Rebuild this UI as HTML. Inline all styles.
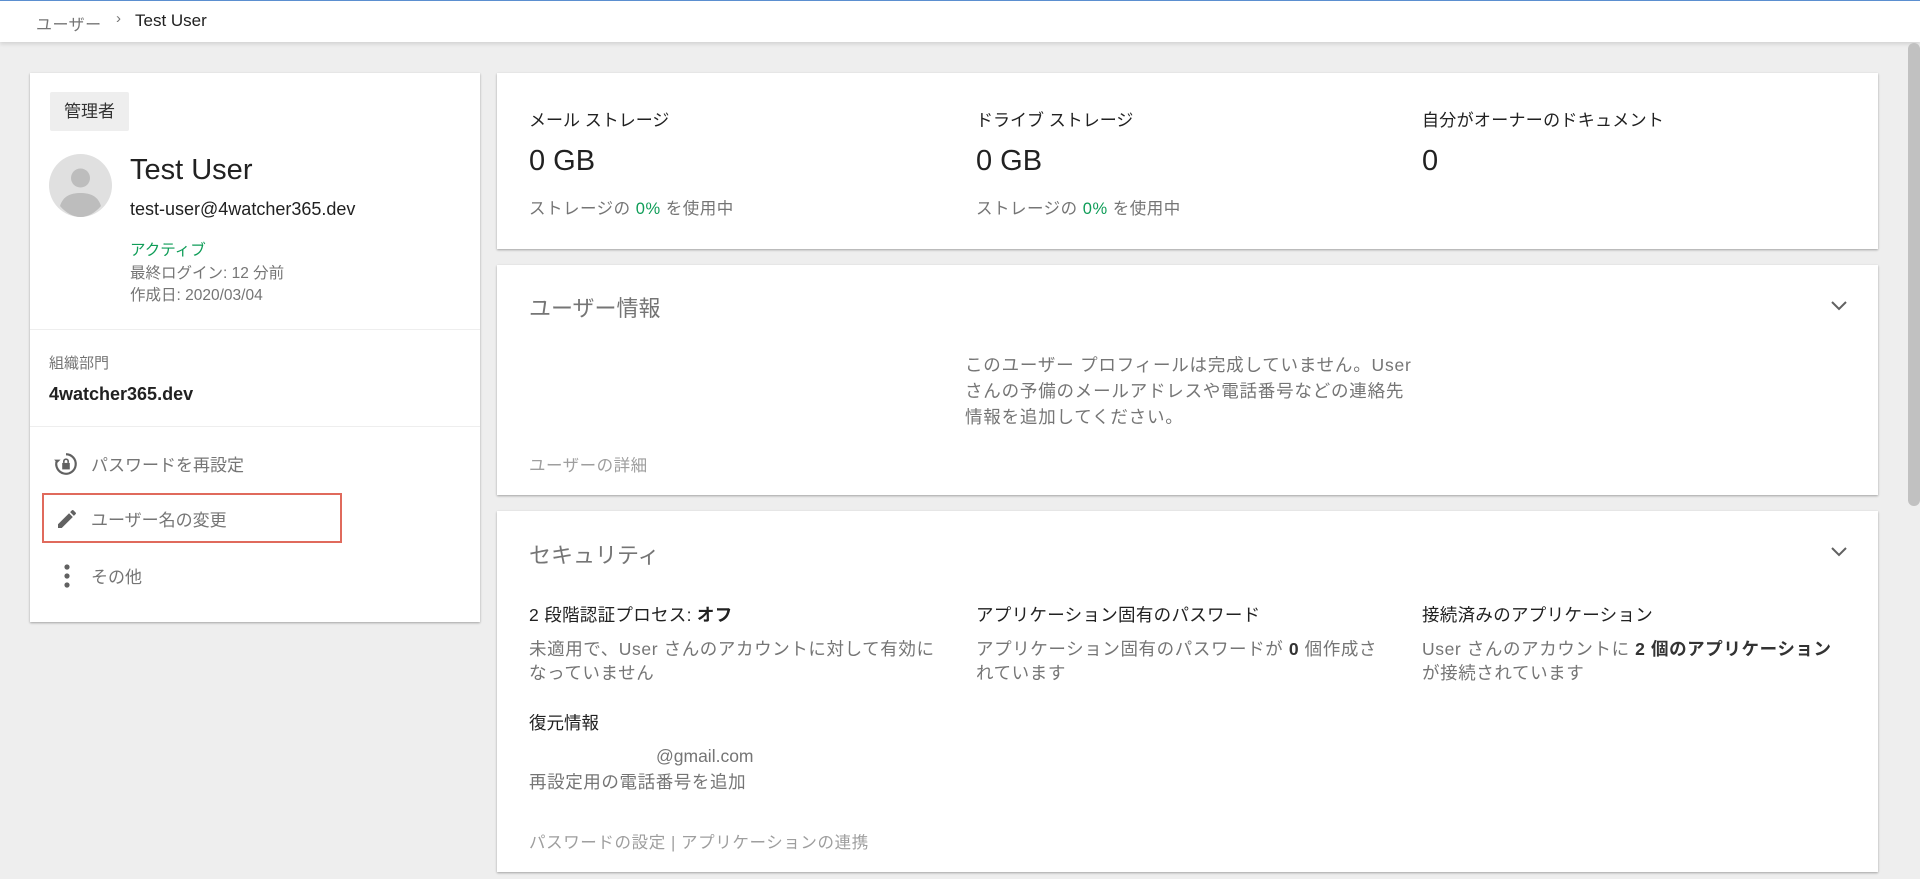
<!DOCTYPE html>
<html><head><meta charset="utf-8"><style>
*{margin:0;padding:0;box-sizing:border-box}
body{width:1920px;height:879px;overflow:hidden;background:#eeeeee;font-family:"Liberation Sans","Noto Sans CJK JP",sans-serif;color:#212121;position:relative}
.a{position:absolute;white-space:nowrap}
.card{position:absolute;background:#fff;box-shadow:0 1px 2px rgba(0,0,0,.25),0 1px 3px rgba(0,0,0,.08)}
.g{color:#757575}
.lg{color:#9e9e9e}
.gr{color:#0f9d58}
.d{font-size:17.5px;letter-spacing:0.6px;line-height:24px}
</style></head><body>
<div class="a" style="left:0;top:0;width:1920px;height:42px;background:#fff;border-top:1px solid #5b8fd0;box-shadow:0 2px 4px rgba(0,0,0,.12)"></div>
<div class="a g" style="left:36px;top:11px;font-size:16px;letter-spacing:0.5px">ユーザー</div>
<div class="a g" style="left:116px;top:10px;font-size:15px">›</div>
<div class="a" style="left:135px;top:11px;font-size:17px;color:#202020">Test User</div>

<!-- left card -->
<div class="card" style="left:30px;top:73px;width:450px;height:549px"></div>
<div class="a" style="left:50px;top:92px;width:79px;height:39px;background:#eeeeee;border-radius:2px;font-size:17px;line-height:39px;text-align:center;color:#333">管理者</div>
<svg class="a" style="left:49px;top:154px" width="63" height="63" viewBox="0 0 63 63"><circle cx="31.5" cy="31.5" r="31.5" fill="#e0e0e0"/><circle cx="31.5" cy="24" r="9.5" fill="#bdbdbd"/><path d="M11 52 C14 42 22 39 31.5 39 C41 39 49 42 52 52 C46 59 39 63 31.5 63 C24 63 17 59 11 52Z" fill="#bdbdbd"/></svg>
<div class="a" style="left:130px;top:154px;font-size:29px;color:#212121">Test User</div>
<div class="a" style="left:130px;top:199px;font-size:18px;color:#212121">test-user@4watcher365.dev</div>
<div class="a gr" style="left:130px;top:238px;font-size:15.5px">アクティブ</div>
<div class="a g" style="left:130px;top:261px;font-size:15.5px">最終ログイン: 12 分前</div>
<div class="a g" style="left:130px;top:283px;font-size:15.5px">作成日: 2020/03/04</div>
<div class="a" style="left:30px;top:329px;width:450px;height:1px;background:#eeeeee"></div>
<div class="a g" style="left:49px;top:352px;font-size:15px">組織部門</div>
<div class="a" style="left:49px;top:384px;font-size:18px;font-weight:bold;color:#212121">4watcher365.dev</div>
<div class="a" style="left:30px;top:426px;width:450px;height:1px;background:#eeeeee"></div>
<svg class="a" style="left:53px;top:451px" width="26" height="26" viewBox="0 0 24 24"><path d="M12 3a9 9 0 1 1-8.5 6" fill="none" stroke="#616161" stroke-width="2"/><path d="M1 8l3 3 3-3" fill="#616161"/><rect x="8.5" y="11" width="7" height="6" fill="#616161"/><path d="M10 11V9.5a2 2 0 0 1 4 0V11" fill="none" stroke="#616161" stroke-width="1.5"/></svg>
<div class="a g" style="left:91px;top:451px;font-size:17px">パスワードを再設定</div>
<div class="a" style="left:42px;top:493px;width:300px;height:50px;border:2px solid #e06a5c"></div>
<svg class="a" style="left:55px;top:507px" width="24" height="24" viewBox="0 0 24 24"><path d="M3 17.25V21h3.75L17.81 9.94l-3.75-3.75L3 17.25zM20.71 7.04a1 1 0 0 0 0-1.41l-2.34-2.34a1 1 0 0 0-1.41 0l-1.83 1.83 3.75 3.75 1.83-1.83z" fill="#616161"/></svg>
<div class="a g" style="left:91px;top:506px;font-size:17px">ユーザー名の変更</div>
<svg class="a" style="left:62px;top:563px" width="10" height="26" viewBox="0 0 10 26"><circle cx="5" cy="4" r="2.6" fill="#616161"/><circle cx="5" cy="13" r="2.6" fill="#616161"/><circle cx="5" cy="22" r="2.6" fill="#616161"/></svg>
<div class="a g" style="left:91px;top:563px;font-size:17px">その他</div>

<!-- card1 -->
<div class="card" style="left:497px;top:73px;width:1381px;height:176px"></div>
<div class="a" style="left:529px;top:106px;font-size:17px">メール ストレージ</div>
<div class="a" style="left:529px;top:145px;font-size:29px">0 GB</div>
<div class="a g" style="left:529px;top:195px;font-size:16.5px;letter-spacing:0.5px">ストレージの <span class="gr">0%</span> を使用中</div>
<div class="a" style="left:976px;top:106px;font-size:17px">ドライブ ストレージ</div>
<div class="a" style="left:976px;top:145px;font-size:29px">0 GB</div>
<div class="a g" style="left:976px;top:195px;font-size:16.5px;letter-spacing:0.5px">ストレージの <span class="gr">0%</span> を使用中</div>
<div class="a" style="left:1422px;top:106px;font-size:17px;letter-spacing:0.3px">自分がオーナーのドキュメント</div>
<div class="a" style="left:1422px;top:145px;font-size:29px">0</div>

<!-- card2 -->
<div class="card" style="left:497px;top:265px;width:1381px;height:230px"></div>
<div class="a g" style="left:529px;top:291px;font-size:22px">ユーザー情報</div>
<svg class="a" style="left:1830px;top:300px" width="18" height="12" viewBox="0 0 18 12"><path d="M2 2l7 7 7-7" fill="none" stroke="#616161" stroke-width="2"/></svg>
<div class="a g" style="left:965px;top:352px;font-size:17.5px;letter-spacing:0.8px;line-height:26px">このユーザー プロフィールは完成していません。User<br>さんの予備のメールアドレスや電話番号などの連絡先<br>情報を追加してください。</div>
<div class="a lg" style="left:529px;top:452px;font-size:16.5px;letter-spacing:0.5px">ユーザーの詳細</div>

<!-- card3 -->
<div class="card" style="left:497px;top:511px;width:1381px;height:361px"></div>
<div class="a g" style="left:529px;top:538px;font-size:22px">セキュリティ</div>
<svg class="a" style="left:1830px;top:546px" width="18" height="12" viewBox="0 0 18 12"><path d="M2 2l7 7 7-7" fill="none" stroke="#616161" stroke-width="2"/></svg>
<div class="a" style="left:529px;top:602px;font-size:17.5px;letter-spacing:0.3px">2 段階認証プロセス: <b>オフ</b></div>
<div class="a g d" style="left:529px;top:637px">未適用で、User さんのアカウントに対して有効に<br>なっていません</div>
<div class="a" style="left:976px;top:602px;font-size:17.5px;letter-spacing:0.3px">アプリケーション固有のパスワード</div>
<div class="a g d" style="left:976px;top:637px">アプリケーション固有のパスワードが <b style="color:#333">0</b> 個作成さ<br>れています</div>
<div class="a" style="left:1422px;top:602px;font-size:17.5px;letter-spacing:0.3px">接続済みのアプリケーション</div>
<div class="a g d" style="left:1422px;top:637px">User さんのアカウントに <b style="color:#333">2 個のアプリケーション</b><br>が接続されています</div>
<div class="a" style="left:529px;top:710px;font-size:17.5px">復元情報</div>
<div class="a g" style="left:656px;top:746px;font-size:17.5px">@gmail.com</div>
<div class="a g d" style="left:529px;top:770px">再設定用の電話番号を追加</div>
<div class="a lg" style="left:529px;top:829px;font-size:16.5px;letter-spacing:0.6px">パスワードの設定 | アプリケーションの連携</div>

<!-- scrollbar -->
<div class="a" style="left:1908px;top:43px;width:12px;height:463px;background:#c1c1c1;border-radius:6px"></div>
</body></html>
